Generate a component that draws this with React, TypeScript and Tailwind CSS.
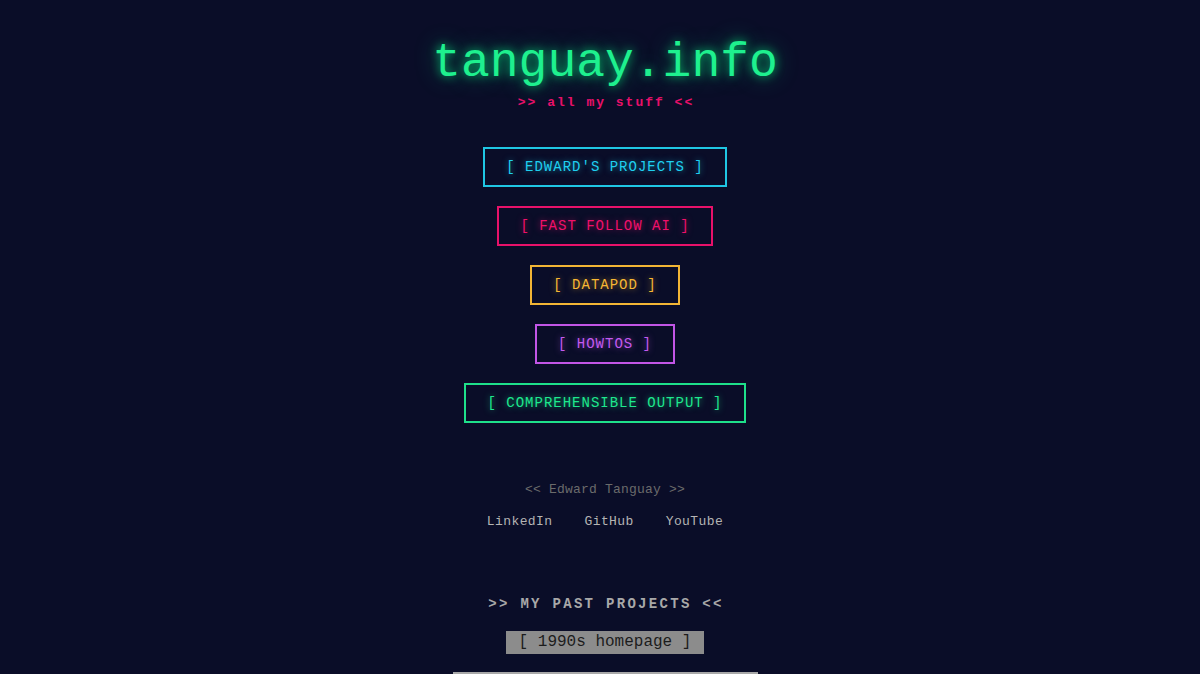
import React from "react";

const buttons = [
  { label: "[ EDWARD'S PROJECTS ]", cls: "text-[#1fd0f0] border-[#1fc6e4] [text-shadow:0_0_6px_rgba(31,208,240,0.6)]" },
  { label: "[ FAST FOLLOW AI ]", cls: "text-[#f0106a] border-[#e8116a] [text-shadow:0_0_6px_rgba(240,16,106,0.6)]" },
  { label: "[ DATAPOD ]", cls: "text-[#f7b733] border-[#f2b535] [text-shadow:0_0_6px_rgba(247,183,51,0.6)]" },
  { label: "[ HOWTOS ]", cls: "text-[#c45af0] border-[#c255e6] [text-shadow:0_0_6px_rgba(196,90,240,0.6)]" },
  { label: "[ COMPREHENSIBLE OUTPUT ]", cls: "text-[#1ee88e] border-[#1ee08a] [text-shadow:0_0_6px_rgba(30,232,142,0.6)]" },
];

export default function App() {
  return (
    <div className="min-h-[674px] w-full overflow-hidden bg-[#0a0d28] font-['Liberation_Mono','Courier_New',monospace]">
      <div className="flex flex-col items-center pt-[39px] pl-[10px]">
        <h1 className="text-[48px] leading-[48px] font-normal text-[#1ef08e] [text-shadow:0_0_10px_rgba(0,255,136,0.7),0_0_24px_rgba(0,255,136,0.45)]">
          tanguay.info
        </h1>
        <div className="mt-[8px] text-[13px] leading-[16px] font-bold tracking-[2px] text-[#e8106a] pl-[2px]">
          &gt;&gt; all my stuff &lt;&lt;
        </div>
        <div className="mt-[36px] flex flex-col items-center gap-[19px]">
          {buttons.map((b) => (
            <div
              key={b.label}
              className={`border-2 px-[21px] py-[10px] text-[14px] leading-[16px] tracking-[1px] whitespace-pre ${b.cls}`}
            >
              {b.label}
            </div>
          ))}
        </div>
        <div className="mt-[59px] text-[13px] leading-[16px] text-[#6b6b6b] tracking-[0.2px]">
          &lt;&lt; Edward Tanguay &gt;&gt;
        </div>
        <div className="mt-[16px] flex gap-[32px] text-[13px] leading-[16px] tracking-[0.4px] text-[#b4b4b4]">
          <span>LinkedIn</span>
          <span>GitHub</span>
          <span>YouTube</span>
        </div>
        <div className="mt-[66px] text-[14px] leading-[16px] font-bold tracking-[2.3px] text-[#a8a8a8] pl-[2px]">
          &gt;&gt; MY PAST PROJECTS &lt;&lt;
        </div>
        <div className="mt-[19px] bg-[#8c8c8c] px-[13px] py-[2px] text-[16px] leading-[19px] text-[#1c1c1c] whitespace-pre">
          [ 1990s homepage ]
        </div>
        <div className="mt-[18px] h-[20px] w-[305px] bg-[#a8a8a8]" />
      </div>
    </div>
  );
}
